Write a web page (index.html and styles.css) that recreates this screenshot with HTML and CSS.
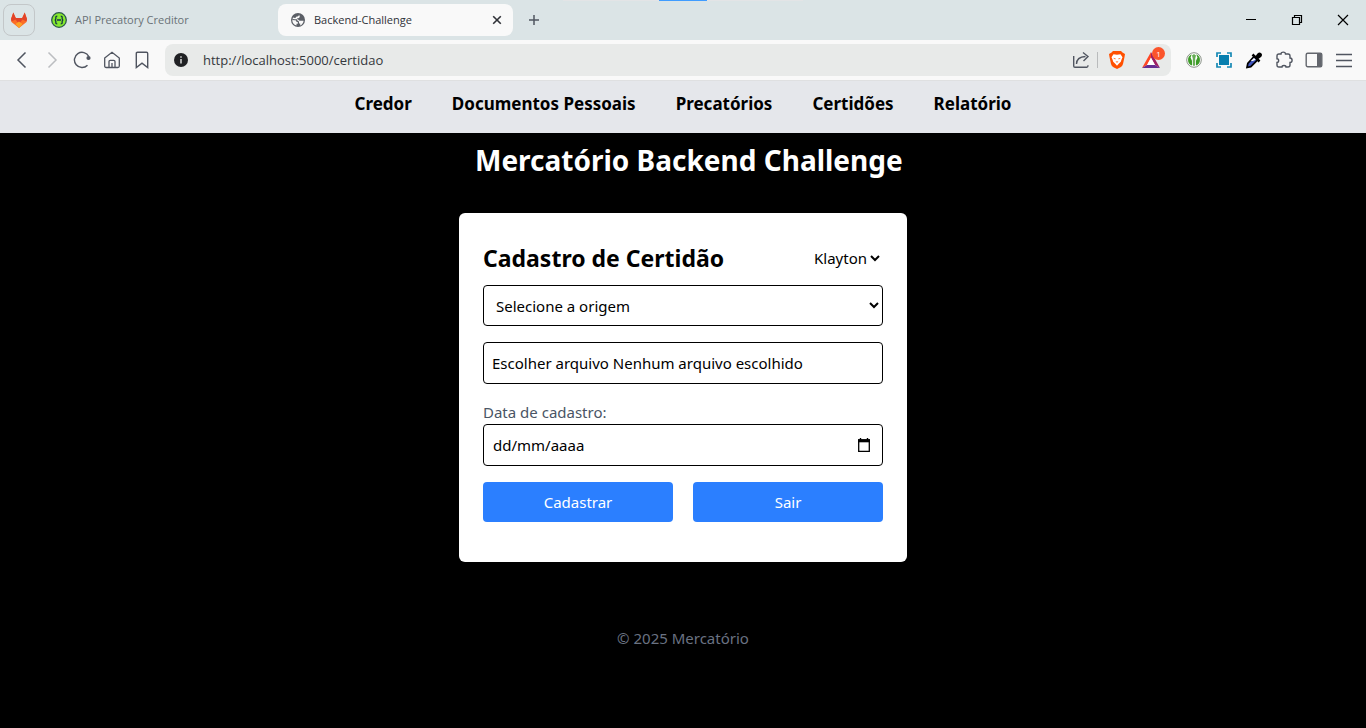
FILE: index.html
```html
<!DOCTYPE html>
<html lang="pt-BR">
<head>
<meta charset="utf-8">
<title>Backend-Challenge</title>
<link rel="stylesheet" href="styles.css">
</head>
<body>
<div class="browser">
  <div class="tabstrip">
    <span class="progress" aria-hidden="true"><span class="progress-value"></span></span>
    <button class="pinned" aria-label="GitLab">
      <svg width="18" height="18" viewBox="0 0 18 18"><path d="M1 8 3.3 1.5 5.8 7h6.4l2.5-5.500L17 8l-.5 3L9 17 1.500 11z" fill="#fc6d26"/><path d="M1 8 3.300 1.500 5.800 7h6.400l2.500-5.500L17 8l-.5 2.500-4-2L9 13 5.500 8.500l-4 2z" fill="#e24329"/><path d="M5.500 13 9 10.500l3.500 2.500L9 17z" fill="#fca326"/></svg>
    </button>
    <button class="tab">
      <svg width="16" height="16" viewBox="0 0 16 16"><circle cx="8" cy="8" r="7.300" fill="#85ea2d" stroke="#2c594c" stroke-width="1.300"/><path d="M6.300 4.200c-2 0-1.300 1.300-1.500 2.600-.1.700-.5 1.200-1.100 1.200.6 0 1 .5 1.100 1.200.2 1.300-.5 2.600 1.500 2.600M9.700 4.200c2 0 1.300 1.300 1.500 2.600.1.700.5 1.200 1.100 1.200-.6 0-1 .5-1.100 1.200-.2 1.300.5 2.600-1.500 2.600M6 8h4" fill="none" stroke="#173647" stroke-width="1.300"/></svg>
      <span>API Precatory Creditor</span>
    </button>
    <div class="tab tab-active">
      <svg width="14" height="14" viewBox="0 0 14 14"><circle cx="7" cy="7" r="7" fill="#5b5f66"/><path d="M8 1.500C8 3 7 3.500 5.800 3.500 5 3.500 5 5 4 5L2 4.500 1.300 7l2.200.2c1.500 0 2 .6 2 1.800h1.300v1.800H5.500v1.700A5.700 5.700 0 0 1 1.300 7L2 6l2 .2h2.500c1 0 1.200 1.600 2.300 1.600h3.800c-.2 2.200-1.400 3.900-3.400 4.600V10.500H8V9C8 7.800 6.500 8 6 7V5.500c1.500 0 2.800-.8 2.800-2z" fill="#f9f9f9"/></svg>
      <span class="tab-title">Backend-Challenge</span>
      <button class="icon" aria-label="Fechar guia"><svg width="10" height="10" viewBox="0 0 10 10"><path d="m1.200 1.200 7.600 7.600m0-7.600L1.200 8.800" stroke="#303238" stroke-width="1.600"/></svg></button>
    </div>
    <button class="icon new-tab" aria-label="Nova guia"><svg width="12" height="12" viewBox="0 0 12 12"><path d="M6 1v10M1 6h10" stroke="#505560" stroke-width="1.500"/></svg></button>
    <div class="window-controls">
      <button class="icon" aria-label="Minimizar"><svg width="12" height="12" viewBox="0 0 12 12"><path d="M1 5.500h10" stroke="#000"/></svg></button>
      <button class="icon" aria-label="Restaurar"><svg width="12" height="12" viewBox="0 0 12 12" fill="none" stroke="#000" stroke-width="1.200"><path d="M1.500 3.500h7v7h-7zM3.500 3V1.500h7v7H9"/></svg></button>
      <button class="icon" aria-label="Fechar"><svg width="12" height="12" viewBox="0 0 12 12"><path d="m1 1 10 10m0-10L1 11" stroke="#000" stroke-width="1.200"/></svg></button>
    </div>
  </div>
  <div class="toolbar">
    <div class="toolbar-group">
      <button class="icon" aria-label="Voltar"><svg width="18" height="18" viewBox="0 0 18 18"><path d="m12.500 1.500-7.500 7.500 7.500 7.500" fill="none" stroke="#505560" stroke-width="1.500"/></svg></button>
      <button class="icon" aria-label="Avançar"><svg width="18" height="18" viewBox="0 0 18 18"><path d="m5.500 1.500 7.500 7.500-7.500 7.500" fill="none" stroke="#bcbec1" stroke-width="1.500"/></svg></button>
      <button class="icon" aria-label="Recarregar"><svg width="18" height="18" viewBox="0 0 18 18"><path d="M14.500 14.200a7.600 7.600 0 1 1 1.300-8.700" fill="none" stroke="#505560" stroke-width="1.400"/><circle cx="15.500" cy="7" r="2.100" fill="#505560"/></svg></button>
      <button class="icon" aria-label="Início"><svg width="18" height="18" viewBox="0 0 18 18" fill="none" stroke="#505560" stroke-width="1.300"><path d="M1.700 7 9 1.300 16.300 7v8q0 1.500-1.500 1.500H3.200q-1.500 0-1.500-1.500zM6 16.500v-6q0-1.200 1.200-1.200h3.600q1.200 0 1.200 1.200v6M9 12v4.500"/></svg></button>
      <button class="icon" aria-label="Favoritos"><svg width="18" height="18" viewBox="0 0 18 18"><path d="M3.300 16.500V2.500q0-1.200 1.200-1.200h9q1.200 0 1.200 1.200v14L9 12.200z" fill="none" stroke="#505560" stroke-width="1.400"/></svg></button>
    </div>
    <div class="address">
      <svg width="14" height="14" viewBox="0 0 14 14"><circle cx="7" cy="7" r="7" fill="#202124"/><path d="M7 6v4.500M7 3.300v1.500" stroke="#e8eae9" stroke-width="1.400"/></svg>
      <input class="url" type="text" aria-label="Endereço" value="http://localhost:5000/certidao">
      <button class="icon" aria-label="Compartilhar"><svg width="18" height="18" viewBox="0 0 18 18" fill="none" stroke="#505560" stroke-width="1.400"><path d="M1.700 5v10q0 1.300 1.300 1.300h12q1 0 1-2M4.500 13q0-7 9-7.500M11 1.500l5 4-4.500 4.500"/></svg></button>
      <span class="divider"></span>
      <button class="icon" aria-label="Brave Shields"><svg width="18" height="18" viewBox="0 0 18 18"><path d="M5 0h8l1.500 1.500L17 3l-.5 3-1.500 7q-.6 2.200-2.500 3.200L9 18l-3.500-1.800Q3.600 15.200 3 13L1.500 6 1 3l2.500-1.500z" fill="#ff5000"/><path d="m5.500 3.200 3.500.5 3.500-.5 2 3-1 2.300-.7 2.300-1.800 1.700L9 14.700l-2-2.200-1.800-1.700-.7-2.300-1-2.300z" fill="#fff"/><path d="m5 6.800 2.700.6-.5 1.200zM13 6.800l-2.700.6.5 1.200zM7.500 10.500h3L9 11.700z" fill="#ff5000"/></svg></button>
      <button class="icon rewards" aria-label="Brave Rewards"><svg width="18" height="16" viewBox="0 0 18 16"><path d="M9 0 0 16l5-3L9 6z" fill="#ff4724"/><path d="m9 0 9 16-5-3L9 6z" fill="#9e1f63"/><path d="m0 16 5-3h8l5 3z" fill="#662d91"/><path d="m9 5.500 4 7.500H5z" fill="#fff"/></svg><span class="badge">1</span></button>
    </div>
    <div class="toolbar-group extensions">
      <button class="icon" aria-label="Gerenciador de senhas"><svg width="18" height="18" viewBox="0 0 18 18"><circle cx="9" cy="9" r="7.300" fill="#fff" stroke="#8b9389"/><path d="M6.800 3.300A6 6 0 0 0 7 14.500V9.800L5.500 6.500zM11.200 3.300A6 6 0 0 1 11 14.500V9.800l1.500-3.300z" fill="#3b9b26"/><path d="M7 4.500 9 3l2 1.500-.8 3V14L9 15.300 7.800 14V7.500z" fill="#68ad56"/></svg></button>
      <button class="icon" aria-label="Captura de tela"><svg width="16" height="16" viewBox="0 0 16 16"><path d="M4 4h8v8H4z" fill="#087faf" stroke="#087faf" stroke-width="2"/><path d="M1 5V1h4m6 0h4v4m0 6v4h-4m-6 0H1v-4" fill="none" stroke="#1689b5" stroke-width="1.700"/></svg></button>
      <button class="icon" aria-label="Seletor de cor"><svg width="18" height="18" viewBox="0 0 18 18"><path d="m9.300 5.200 3.500 3.500-7 7L2 16.500l.8-4z" fill="#4055be" stroke="#000" stroke-width="1.700"/><path d="m9.500 6.500 3-4q2-2 3.700-.3T16 6l-4 3z"/><path d="m7.500 3.500 7 7" stroke="#000" stroke-width="2.500"/><path d="m9 7 1.700 1.700-3 1.200H5.800z" fill="#fff"/></svg></button>
      <button class="icon" aria-label="Extensões"><svg width="18" height="18" viewBox="0 0 18 18"><path d="M2 5q0-2 2-2h2c0-2.500 4.500-2.500 4.500 0H13q2 0 2 2v2c2.800 0 2.800 4.500 0 4.500V14q0 2-2 2h-2c0-2-4-2-4 0H4q-2 0-2-2v-2.500c2.200 0 2.200-3.800 0-3.800z" fill="none" stroke="#505560" stroke-width="1.400"/></svg></button>
      <button class="icon" aria-label="Painel lateral"><svg width="18" height="18" viewBox="0 0 18 18"><rect x="1.200" y="2.200" width="15.600" height="13.600" rx="1.500" fill="none" stroke="#63666d" stroke-width="1.400"/><path d="M12 2h4.500v14H12z" fill="#63666d"/></svg></button>
      <button class="icon" aria-label="Menu"><svg width="18" height="18" viewBox="0 0 18 18"><path d="M1 3.500h16M1 9.500h16M1 15.500h16" stroke="#505560" stroke-width="1.300"/></svg></button>
    </div>
  </div>
</div>
<nav class="nav">
  <a href="#credor">Credor</a>
  <a href="#documentos">Documentos Pessoais</a>
  <a href="#precatorios">Precatórios</a>
  <a href="#certidoes">Certidões</a>
  <a href="#relatorio">Relatório</a>
</nav>
<main class="main">
  <h1 class="title">Mercatório Backend Challenge</h1>
  <form class="card">
    <div class="card-head">
      <h2 class="card-title">Cadastro de Certidão</h2>
      <select class="creditor" aria-label="Credor"><option>Klayton</option></select>
    </div>
    <select class="field origin" aria-label="Origem"><option>Selecione a origem</option></select>
    <label class="field file" for="arquivo">Escolher arquivo Nenhum arquivo escolhido</label>
    <input id="arquivo" class="visually-hidden" type="file">
    <label class="date-label" for="data">Data de cadastro:</label>
    <div class="field date">
      <input id="data" class="date-input" type="text" placeholder="dd/mm/aaaa">
      <button class="icon" type="button" aria-label="Abrir calendário"><svg width="16" height="16" viewBox="0 0 16 16"><path d="M4.500 1v2M11.500 1v2" stroke="#000" stroke-width="1.400"/><path d="M2.700 3h10.600v11.300H2.700z" fill="none" stroke="#000" stroke-width="1.300"/><path d="M2 2.300h12v3H2z"/></svg></button>
    </div>
    <div class="actions">
      <button class="action" type="button">Cadastrar</button>
      <button class="action" type="button">Sair</button>
    </div>
  </form>
</main>
<footer class="footer">© 2025 Mercatório</footer>
</body>
</html>
```
FILE: styles.css
```css
* { box-sizing: border-box; }
body {
  margin: 0;
  min-height: 100vh;
  background: #000;
  color: #000;
  font: 15px/24px "Noto Sans", "Open Sans", sans-serif;
}
h1, h2 { margin: 0; }
svg { display: block; flex: none; }
button, input, select { font: inherit; color: inherit; }
button { border: 0; padding: 0; background: none; }
.icon { display: flex; align-items: center; justify-content: center; flex: none; }
.visually-hidden {
  position: absolute;
  width: 1px;
  height: 1px;
  overflow: hidden;
  clip-path: inset(50%);
}

.browser { border-bottom: 1px solid #dfe0e1; background: #f9f9f9; }
.tabstrip {
  position: relative;
  display: flex;
  align-items: center;
  height: 40px;
  padding: 0 17px 0 3px;
  background: #dbe4e6;
  font: 11px/16px "Open Sans", sans-serif;
}
.progress {
  position: absolute;
  top: 0;
  left: 50%;
  width: 240px;
  height: 1px;
  background: #e3e4e6;
  transform: translateX(-50%);
}
.progress-value { display: block; width: 48px; height: 1px; margin: 0 auto; background: #409cff; }
.pinned {
  display: flex;
  align-items: center;
  justify-content: center;
  width: 32px;
  height: 32px;
  border: 1px solid #c3c7c9;
  border-radius: 8px;
}
.tab {
  display: flex;
  align-items: center;
  gap: 8px;
  width: 235px;
  height: 32px;
  padding: 0 11px 0 16px;
  color: #6a7277;
}
.tab-active { gap: 9px; margin-left: 8px; padding-left: 13px; border-radius: 8px; background: #f9f9f9; color: #303238; }
.tab-title { flex: 1; }
.new-tab { margin-left: 15px; }
.window-controls { display: flex; gap: 34px; margin-left: auto; }
.toolbar { display: flex; align-items: center; height: 40px; padding: 0 13px; }
.toolbar-group { display: flex; align-items: center; gap: 12px; }
.extensions { margin-left: 14px; }
.extensions .icon { width: 18px; }
.address {
  display: flex;
  align-items: center;
  flex: 1;
  height: 32px;
  margin-left: 14px;
  padding: 0 11px 0 9px;
  border-radius: 8px;
  background: #e8eae9;
}
.url {
  flex: 1;
  min-width: 0;
  height: 24px;
  margin-left: 15px;
  padding: 0;
  border: 0;
  outline: 0;
  background: none;
  color: #35383d;
  font: 13px/24px "Open Sans", sans-serif;
}
.divider { width: 1px; height: 16px; margin: 0 10px 0 7px; background: #b9bbbc; }
.rewards { position: relative; margin-left: 16px; }
.badge {
  position: absolute;
  top: -5px;
  right: -5px;
  width: 13px;
  height: 13px;
  border-radius: 50%;
  background: #fb542b;
  color: #fff;
  font: 8px/13px "Open Sans", sans-serif;
  text-align: center;
}

.nav {
  display: flex;
  justify-content: center;
  gap: 40px;
  padding: 9px 16px 15px;
  background: #e5e7eb;
  font-size: 17px;
  font-weight: 700;
  line-height: 28px;
}
.nav a { color: inherit; text-decoration: none; }
.main { display: flex; flex-direction: column; align-items: center; padding: 9px 16px 0; }
.title { width: 100%; max-width: 448px; padding-left: 16px; color: #fff; font-size: 28px; line-height: 36px; white-space: nowrap; }
.card {
  display: flex;
  flex-direction: column;
  width: 100%;
  max-width: 448px;
  margin-top: 35px;
  padding: 24px 24px 40px;
  border-radius: 6px;
  background: #fff;
}
.card-head { display: flex; align-items: center; justify-content: space-between; height: 42px; margin-bottom: 6px; }
.card-title { font-size: 23px; line-height: 32px; }
.creditor { padding: 0; border: 0; background: #fff; }
.field { border: 1px solid #000; border-radius: 4px; background: #fff; }
.origin { height: 41px; padding: 8px; }
.file { margin-top: 16px; padding: 8px; }
.date-label { margin-top: 16px; color: #4a5565; }
.date { display: flex; align-items: center; padding: 8px 10px 8px 9px; }
.date-input { flex: 1; min-width: 0; height: 24px; padding: 0; border: 0; outline: 0; background: none; }
.date-input::placeholder { color: #000; opacity: 1; }
.actions { display: grid; grid-template-columns: 1fr 1fr; gap: 20px; margin-top: 16px; }
.action { padding: 8px; border-radius: 4px; background: #2b7fff; color: #fff; }
.footer { padding: 64px 16px; color: #6a7282; text-align: center; }
```
